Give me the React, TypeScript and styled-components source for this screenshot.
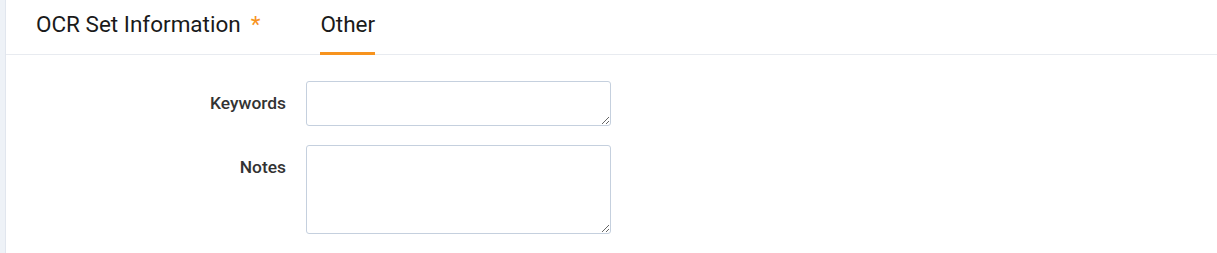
import React from "react";
import styled, { createGlobalStyle } from "styled-components";

const Global = createGlobalStyle`
  html, body { margin: 0; padding: 0; background: #fff; }
  body { font-family: Roboto, "Noto Sans", sans-serif; }
`;

const Page = styled.div`
  display: flex;
  width: 1217px;
  height: 253px;
  background: #fff;
`;

const SideStrip = styled.div`
  width: 5px;
  flex: none;
  background: #eef2f7;
  border-right: 1px solid #e1e6ee;
`;

const Main = styled.div`
  flex: 1;
  display: flex;
  flex-direction: column;
`;

const TabBar = styled.div`
  display: flex;
  align-items: stretch;
  height: 54px;
  border-bottom: 1px solid #e8ebf0;
  padding-left: 30px;
  gap: 60px;
`;

const Tab = styled.div<{ $active?: boolean }>`
  display: flex;
  align-items: center;
  font-size: 22.5px;
  color: #1a1a1a;
  box-sizing: border-box;
  padding-bottom: 8px;
  border-top: 3px solid transparent;
  border-bottom: 3px solid ${(p) => (p.$active ? "#f7931e" : "transparent")};
  margin-bottom: -1px;
`;

const Required = styled.span`
  color: #f7931e;
  margin-left: 10px;
`;

const Form = styled.div`
  display: flex;
  flex-direction: column;
  gap: 19px;
  padding-top: 26px;
`;

const Row = styled.div`
  display: grid;
  grid-template-columns: 280px 305px;
  column-gap: 20px;
  align-items: start;
`;

const Label = styled.label`
  text-align: right;
  font-size: 17.4px;
  font-weight: 500;
  color: #333;
  padding-top: 12px;
`;

const TextArea = styled.textarea<{ $h: number }>`
  box-sizing: border-box;
  width: 305px;
  height: ${(p) => p.$h}px;
  border: 1px solid #c5d0de;
  border-radius: 3px;
  margin: 0;
  padding: 6px 8px;
  font-family: Roboto, sans-serif;
  font-size: 14px;
  resize: vertical;
  display: block;
  outline: none;
`;

export default function App() {
  return (
    <>
      <Global />
      <Page>
        <SideStrip />
        <Main>
          <TabBar>
            <Tab>
              OCR Set Information<Required>*</Required>
            </Tab>
            <Tab $active>Other</Tab>
          </TabBar>
          <Form>
            <Row>
              <Label>Keywords</Label>
              <TextArea $h={45} />
            </Row>
            <Row>
              <Label>Notes</Label>
              <TextArea $h={89} />
            </Row>
          </Form>
        </Main>
      </Page>
    </>
  );
}
